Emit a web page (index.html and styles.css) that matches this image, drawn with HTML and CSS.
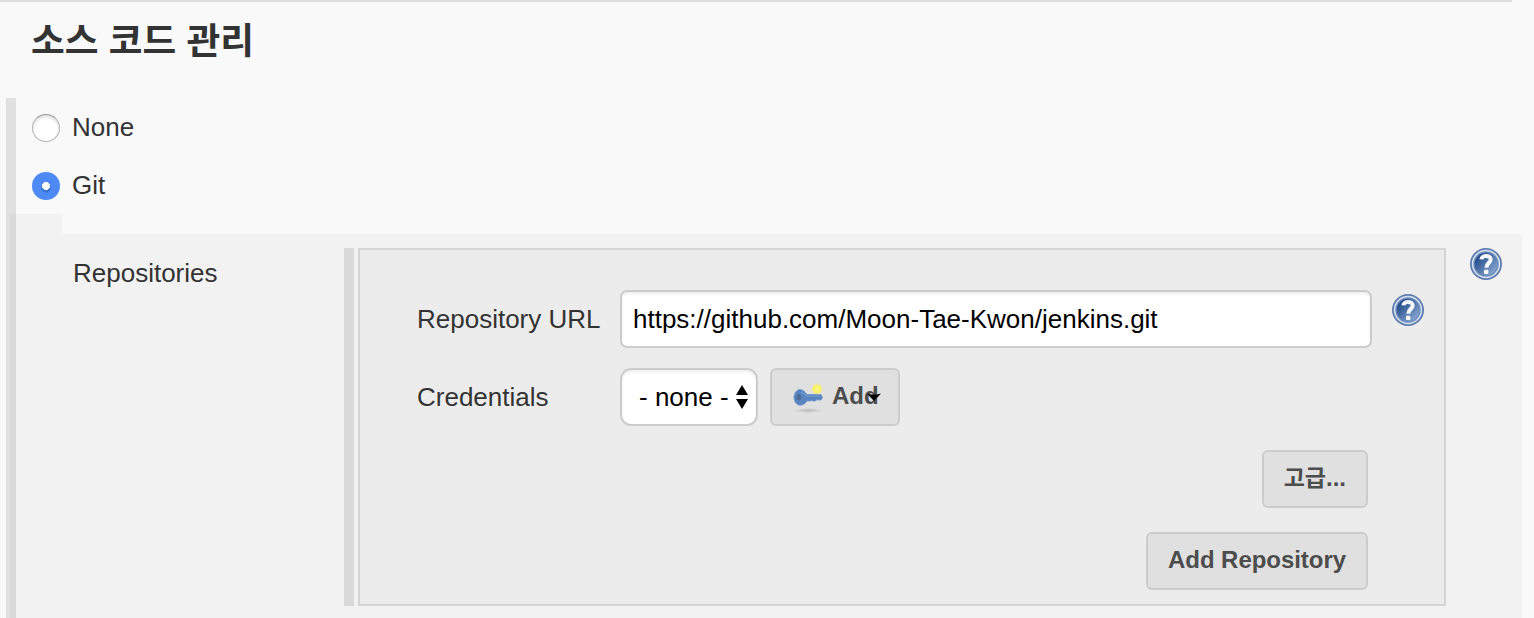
FILE: index.html
```html
<!DOCTYPE html>
<html lang="ko">
<head>
<meta charset="utf-8">
<title>소스 코드 관리</title>
<link rel="stylesheet" href="styles.css">
</head>
<body>
<svg width="0" height="0" class="defs" aria-hidden="true">
  <defs>
    <linearGradient id="help-fill" x1="0" y1="0" x2="1" y2="1">
      <stop offset="0.25" stop-color="#2c5390"/>
      <stop offset="1" stop-color="#9dbbe0"/>
    </linearGradient>
    <symbol id="help" viewBox="0 0 32 32">
      <circle cx="16" cy="16" r="15.1" fill="#d6e0ef" stroke="#5f7db0" stroke-width="1.8"/>
      <circle cx="16" cy="16" r="12" fill="url(#help-fill)" stroke="#6d8dbd" stroke-width="1.4"/>
      <path d="M11.4 11.400C11.600 6.900 20.900 6.800 20.700 11.600C20.500 15 16.400 15.100 16.300 19.700" fill="none" stroke="#f4f7fb" stroke-width="4"/>
      <rect x="14" y="21.700" width="4.400" height="4.200" rx="1" fill="#f4f7fb"/>
    </symbol>
  </defs>
</svg>
<main class="page">
  <h1 class="title">소스 코드 관리</h1>
  <section class="scm">
    <label class="option"><span class="radio"></span>None</label>
    <label class="option"><span class="radio radio-on"></span>Git</label>
    <div class="git">
      <div class="git-tab"></div>
      <div class="git-body">
        <div class="git-label">Repositories</div>
        <div class="repo">
          <div class="row">
            <span class="label">Repository URL</span>
            <div class="input">https://github.com/Moon-Tae-Kwon/jenkins.git</div>
            <svg class="help"><use href="#help"/></svg>
          </div>
          <div class="row row-cred">
            <span class="label">Credentials</span>
            <div class="select">- none -
              <svg class="arrows" width="12" height="24" viewBox="0 0 12 24"><path d="M6 0L12 10H0ZM6 24L0 14H12Z"/></svg>
            </div>
            <button class="btn btn-add">
              <svg class="key" width="32" height="32" viewBox="0 0 32 32">
                <defs>
                  <radialGradient id="glow"><stop offset="0" stop-color="#fffb9a"/><stop offset=".55" stop-color="#fbf15c"/><stop offset="1" stop-color="#fbf15c" stop-opacity="0"/></radialGradient>
                  <radialGradient id="shade"><stop offset="0" stop-color="#000" stop-opacity=".18"/><stop offset="1" stop-color="#000" stop-opacity="0"/></radialGradient>
                </defs>
                <ellipse cx="16" cy="28.500" rx="14" ry="2.600" fill="url(#shade)"/>
                <circle cx="25" cy="7" r="6" fill="url(#glow)"/>
                <path d="M8 7.500C11 7.500 13 10 15 12.500H29L30.500 15.500L29 18H26.500L25 17.500L23.500 19H21L19.500 18.500L18 19H15C13.500 21.500 11 23.200 8 23.200C4.500 23.200 2 19.500 2 15.500S4.500 7.500 8 7.500Z" fill="#5884c0" stroke="#7095c9" stroke-width=".8"/>
                <path d="M9 10C11 10.500 12.500 12.500 14.500 14H28" fill="none" stroke="#6f96cc" stroke-width="1.300"/>
                <ellipse cx="6.800" cy="15.300" rx="2.200" ry="3.200" fill="#4d6c98"/>
              </svg>
              <span>Add</span>
              <svg class="caret" width="14" height="9" viewBox="0 0 14 9"><path d="M0 0.500L4 1.500H10L14 0.500L7 8Z"/></svg>
            </button>
          </div>
          <div class="actions">
            <button class="btn"><span class="ko">고급</span>...</button>
            <button class="btn btn-repo">Add Repository</button>
          </div>
        </div>
        <svg class="help help-outer"><use href="#help"/></svg>
      </div>
    </div>
  </section>
</main>
</body>
</html>
```
FILE: styles.css
```css
* { box-sizing: border-box; }
body {
  margin: 0;
  height: 618px;
  overflow: hidden;
  background: #f9f9f9;
  color: #333;
  font: 26px/30px "Liberation Sans", "Noto Sans CJK KR", sans-serif;
}
.defs { display: block; }
.page { display: flex; flex-direction: column; height: 618px; }
.page::before {
  content: "";
  flex: none;
  height: 2px;
  margin-right: 22px;
  background: #ddd;
}
.title {
  flex: none;
  height: 96px;
  margin: 0;
  padding: 9px 0 0 31px;
  font: bold 36.7px/54px "Noto Sans CJK KR", sans-serif;
}
.scm {
  flex: 1;
  display: flex;
  flex-direction: column;
  margin-left: 6px;
  padding-right: 12px;
  border-left: 10px solid #e0e0e0;
}
.option {
  display: flex;
  align-items: center;
  gap: 12px;
  height: 58px;
  padding: 0 0 1px 16px;
}
.radio {
  width: 28px;
  height: 28px;
  margin-top: 2px;
  border-radius: 50%;
  border: 1.5px solid #b4b4b4;
  border-top-color: #999;
  background: #fff;
  box-shadow: inset 0 2px 3px #ddd;
}
.radio-on {
  border: 0;
  background: radial-gradient(circle at 50% 50%, #fff 3.7px, transparent 4.3px), radial-gradient(circle at 50% 56%, #326fcf 3.5px, #4d8af5 5.5px);
  box-shadow: none;
}
.git { flex: 1; display: flex; flex-direction: column; margin-left: -6px; }
.git-tab { width: 52px; height: 20px; background: rgba(0, 0, 0, .026); }
.git-body {
  flex: 1;
  display: flex;
  align-items: flex-start;
  padding-top: 14px;
  background: rgba(0, 0, 0, .026);
}
.git-label { width: 334px; padding: 10px 0 0 63px; }
.repo {
  position: relative;
  width: 1088px;
  height: 358px;
  margin-left: 14px;
  padding: 40px 20px 0 56px;
  border: 2px solid #d5d5d5;
  background: #ececec;
}
.repo::before {
  content: "";
  position: absolute;
  left: -16px;
  top: -2px;
  width: 10px;
  height: 358px;
  background: #d9d9d9;
}
.row { display: flex; height: 58px; }
.label { width: 204px; padding-top: 14px; padding-left: 1px; white-space: nowrap; }
.input, .select {
  height: 58px;
  border: 2px solid #ccc;
  border-radius: 8px;
  background: #fff;
  box-shadow: inset 0 2px 3px rgba(0, 0, 0, .07);
  color: #000;
}
.input { width: 752px; padding: 12px 11px; border-radius: 7px; white-space: nowrap; }
.help { width: 32px; height: 32px; margin: 4px 0 0 20px; }
.help-outer { margin: 0 0 0 24px; }
.row-cred { margin-top: 20px; }
.select {
  display: flex;
  align-items: center;
  justify-content: space-between;
  width: 138px;
  margin-right: 12px;
  padding: 0 8px 0 17px;
  border-radius: 11px;
  white-space: nowrap;
}
.arrows { flex: none; }
.btn {
  height: 58px;
  margin: 0;
  padding: 0 20px 3px;
  border: 2px solid #ccc;
  border-radius: 6px;
  background: #e0e0e0;
  color: #4d4d4d;
  font: bold 24px/30px "Liberation Sans", "Noto Sans CJK KR", sans-serif;
}
.btn-repo { width: 222px; padding-left: 19px; padding-right: 19px; letter-spacing: -.05px; }
.ko { font-size: 23px; }
.btn-add { position: relative; display: flex; align-items: center; width: 130px; }
.btn-add span { margin-left: 8px; }
.key { margin-top: 4px; flex: none; }
.caret { position: absolute; left: 95px; top: 23px; }
.actions {
  display: flex;
  flex-direction: column;
  align-items: flex-end;
  gap: 24px;
  padding: 24px 56px 0 0;
}
```
